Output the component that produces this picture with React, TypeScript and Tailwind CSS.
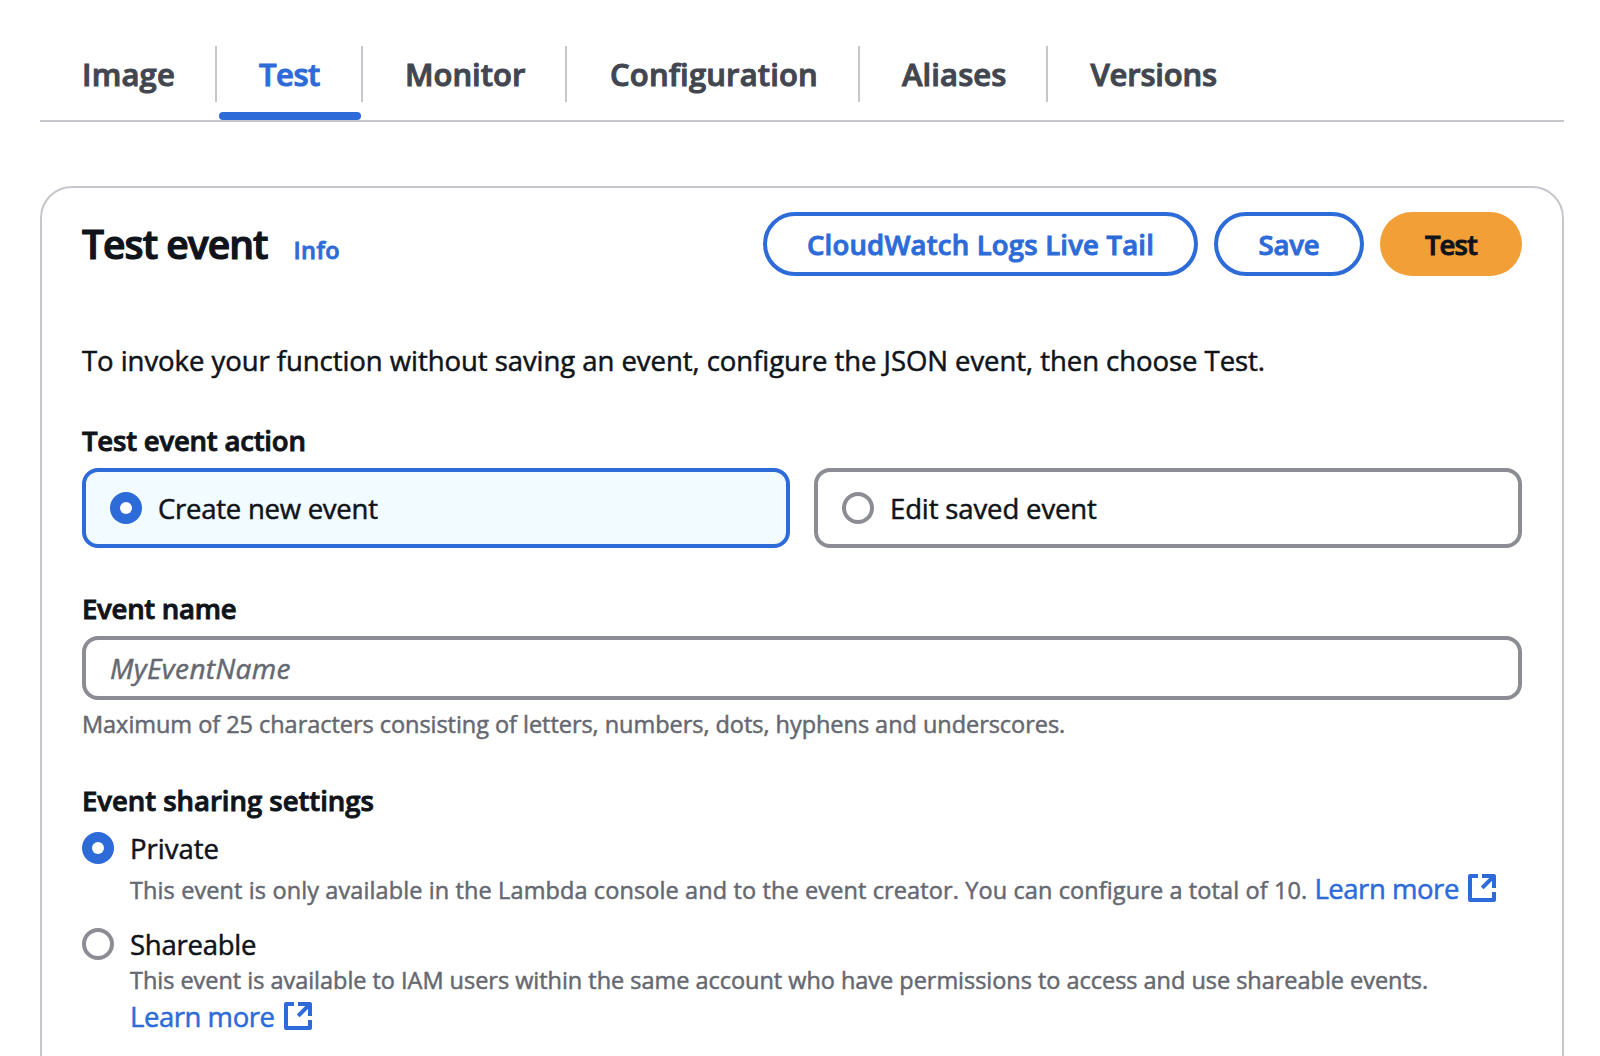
import React from "react";

function Radio({ checked = false }: { checked?: boolean }) {
  return checked ? (
    <span className="flex size-8 shrink-0 items-center justify-center rounded-full bg-[#2d6bd9]">
      <span className="size-3 rounded-full bg-white" />
    </span>
  ) : (
    <span className="block size-8 shrink-0 rounded-full border-4 border-[#8c8c94] bg-white" />
  );
}

function ExternalIcon() {
  return (
    <svg className="size-7 shrink-0" viewBox="0 0 28 28" fill="none" stroke="#2d6bd9" strokeWidth="4" strokeLinejoin="round">
      <path d="M10 2H2v24h24v-8" />
      <path d="M14 2h12v12" />
      <path d="M26 2L14.2 13.8" />
    </svg>
  );
}

function LearnMore() {
  return (
    <a className="flex h-10 items-center gap-[9px] text-[27.5px] leading-10 tracking-[-0.45px] text-[#2d6bd9] [-webkit-text-stroke:0.5px]">
      <span className="pt-0.5">Learn more</span>
      <ExternalIcon />
    </a>
  );
}

const tabs = [
  { label: "Image", className: "w-[177px] border-r-2", text: "pl-[42px] tracking-[0.2px]" },
  { label: "Test", className: "w-[146px] border-r-2", text: "pl-[42px] tracking-[-0.45px]" },
  { label: "Monitor", className: "w-[204px] border-r-2", text: "pl-[42px] tracking-[-0.02px]" },
  { label: "Configuration", className: "w-[293px] border-r-2", text: "pl-[43px] tracking-[0.16px]" },
  { label: "Aliases", className: "w-[188px] border-r-2", text: "pl-[42px] tracking-[0.1px]" },
  { label: "Versions", className: "w-[210px]", text: "pl-[42.5px] tracking-[-0.2px]" },
];

function Label({ children, className }: { children: React.ReactNode; className: string }) {
  return (
    <div className={"mt-10 h-10 whitespace-nowrap text-[27.5px] font-semibold leading-[42px] [-webkit-text-stroke:0.9px] " + className}>
      {children}
    </div>
  );
}

export default function App() {
  return (
    <div className="h-[1056px] w-[1600px] overflow-hidden bg-white pl-10 pt-[46px] pr-9 font-['Open_Sans','Noto_Sans',sans-serif] text-[#0f141a]">
      <nav className="flex h-[76px] border-b-2 border-[#c6c6cd]">
        {tabs.map((t) => {
          const active = t.label === "Test";
          return (
            <div key={t.label} className="flex flex-col">
              <div className={"h-14 border-[#c6c6cd] " + t.className}>
                <span
                  className={
                    "block whitespace-nowrap text-[31px] font-semibold leading-[56px] [-webkit-text-stroke:1px] " +
                    t.text +
                    (active ? " text-[#2d6bd9]" : " text-[#424650]")
                  }
                >
                  {t.label}
                </span>
              </div>
              {active && <div className="mt-2.5 ml-0.5 h-2 w-[142px] rounded-full bg-[#2d6bd9]" />}
            </div>
          );
        })}
      </nav>

      <section className="mt-16 h-[920px] rounded-[32px] border-2 border-[#c6c6cd] px-10 pt-6">
        <header className="flex h-16 items-center justify-between">
          <div className="flex items-baseline whitespace-nowrap font-semibold">
            <h2 className="w-[211.5px] text-[39px] leading-[66px] tracking-[-0.95px] [-webkit-text-stroke:1.2px]">Test event</h2>
            <a className="text-[23.5px] tracking-[0.4px] text-[#2d6bd9] [-webkit-text-stroke:0.8px]">Info</a>
          </div>
          <div className="flex gap-4 whitespace-nowrap text-[27.5px] font-semibold [-webkit-text-stroke:0.9px]">
            <button className="h-16 w-[435px] rounded-full border-4 border-[#2d6bd9] pt-0.5 leading-[54px] tracking-[0.2px] text-[#2d6bd9]">
              CloudWatch Logs Live Tail
            </button>
            <button className="h-16 w-[150px] rounded-full border-4 border-[#2d6bd9] pt-0.5 leading-[54px] tracking-[-0.1px] text-[#2d6bd9]">
              Save
            </button>
            <button className="h-16 w-[142px] rounded-full bg-[#f29f38] pt-0.5 leading-[62px] tracking-[-0.9px]">Test</button>
          </div>
        </header>

        <p className="mt-16 h-10 whitespace-nowrap text-[27.5px] leading-[42px] tracking-[-0.05px] [-webkit-text-stroke:0.5px]">
          To invoke your function without saving an event, configure the JSON event, then choose Test.
        </p>

        <Label className="tracking-[-0.2px]">Test event action</Label>
        <div className="mt-2 grid grid-cols-2 gap-6 text-[27.5px] [-webkit-text-stroke:0.5px]">
          <div className="flex h-20 items-center gap-4 rounded-[16px] border-4 border-[#2d6bd9] bg-[#f2fbff] px-6 tracking-[-0.25px]">
            <Radio checked />
            <span className="pt-0.5">Create new event</span>
          </div>
          <div className="flex h-20 items-center gap-4 rounded-[16px] border-4 border-[#8c8c94] px-6 tracking-[-0.13px]">
            <Radio />
            <span className="pt-0.5">Edit saved event</span>
          </div>
        </div>

        <Label className="tracking-[-0.25px]">Event name</Label>
        <div className="mt-2 flex h-16 items-center rounded-[16px] border-4 border-[#8c8c94] px-6 text-[28px] tracking-[0.35px] text-[#656871] italic [-webkit-text-stroke:0.5px]">
          MyEventName
        </div>
        <p className="mt-2 h-8 whitespace-nowrap text-[23.5px] leading-8 tracking-[-0.04px] text-[#656871] [-webkit-text-stroke:0.5px]">
          Maximum of 25 characters consisting of letters, numbers, dots, hyphens and underscores.
        </p>

        <Label className="tracking-[-0.02px]">Event sharing settings</Label>
        <div className="mt-2 flex gap-4">
          <div className="pt-1">
            <Radio checked />
          </div>
          <div className="whitespace-nowrap [-webkit-text-stroke:0.5px]">
            <div className="h-10 text-[27.5px] leading-[42px]">Private</div>
            <div className="flex h-10 items-center gap-[7px]">
              <span className="pt-[3px] text-[23.5px] leading-10 tracking-[0.11px] text-[#656871]">
                This event is only available in the Lambda console and to the event creator. You can configure a total of 10.
              </span>
              <LearnMore />
            </div>
          </div>
        </div>
        <div className="mt-4 flex gap-4">
          <div className="pt-1">
            <Radio />
          </div>
          <div className="whitespace-nowrap [-webkit-text-stroke:0.5px]">
            <div className="h-10 text-[27.5px] leading-[42px] tracking-[-0.25px]">Shareable</div>
            <div className="h-8 text-[23.5px] leading-8 tracking-[-0.03px] text-[#656871]">
              This event is available to IAM users within the same account who have permissions to access and use shareable events.
            </div>
            <LearnMore />
          </div>
        </div>
      </section>
    </div>
  );
}
